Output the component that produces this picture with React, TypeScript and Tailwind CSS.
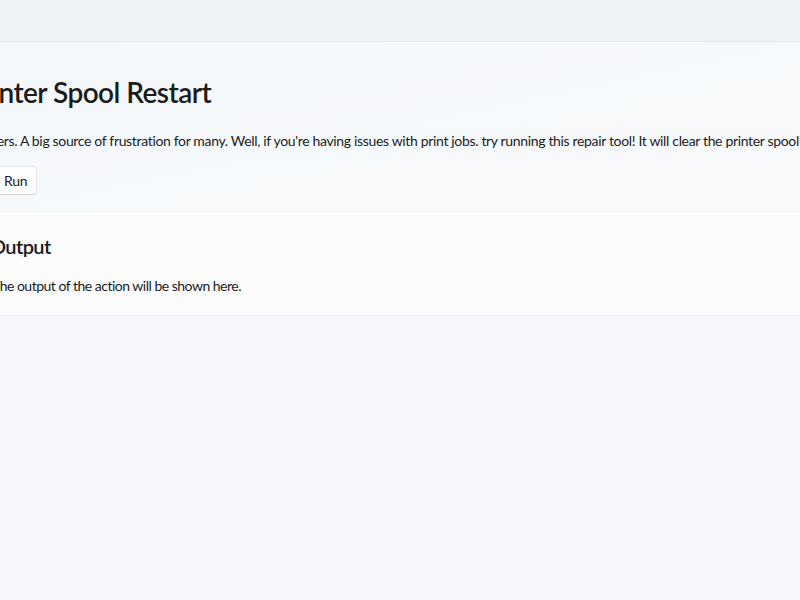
import React from "react";

export default function App() {
  return (
    <div
      className="w-[800px] h-[600px] overflow-hidden bg-[#f6f8fb] text-[#1b1b1b]"
      style={{ fontFamily: 'Lato, "Noto Sans", sans-serif' }}
    >
      <div className="h-[42px] bg-[#eff3f7] border-b border-[#e3e8ee]" />
      <div className="bg-gradient-to-br from-[#f4f8fb] to-[#f9fafb]">
        <div className="-ml-[33px] pt-[32px] flex flex-col items-start">
          <h1 className="-ml-[1px] text-[28px] leading-[36px] font-semibold tracking-[-0.55px] whitespace-nowrap">Printer Spool Restart</h1>
          <p className="ml-[2px] mt-[21px] text-[14px] leading-[20px] tracking-[-0.34px] whitespace-nowrap">
            Printers. A big source of frustration for many. Well, if you're having issues with print jobs. try running this repair tool! It will clear the printer spool and restart the service.
          </p>
          <button className="mt-[15px] ml-[24px] h-[29px] pl-[12px] pr-[9px] rounded-[4px] bg-white border border-[#e5e5e5] border-b-[#d0d0d0] text-[14px] leading-[20px] tracking-[-0.3px]">
            Run
          </button>
        </div>
        <div className="h-[16px]" />
      </div>
      <div className="bg-[#fcfcfd] pt-[20px] pb-[19px] -ml-[8px] border-y border-[#f0f2f5]">
        <h2 className="-ml-[2px] text-[20px] leading-[28px] font-semibold tracking-[-0.6px]">Output</h2>
        <p className="mt-[16px] text-[14px] leading-[20px] tracking-[-0.5px] whitespace-nowrap">The output of the action will be shown here.</p>
      </div>
    </div>
  );
}
